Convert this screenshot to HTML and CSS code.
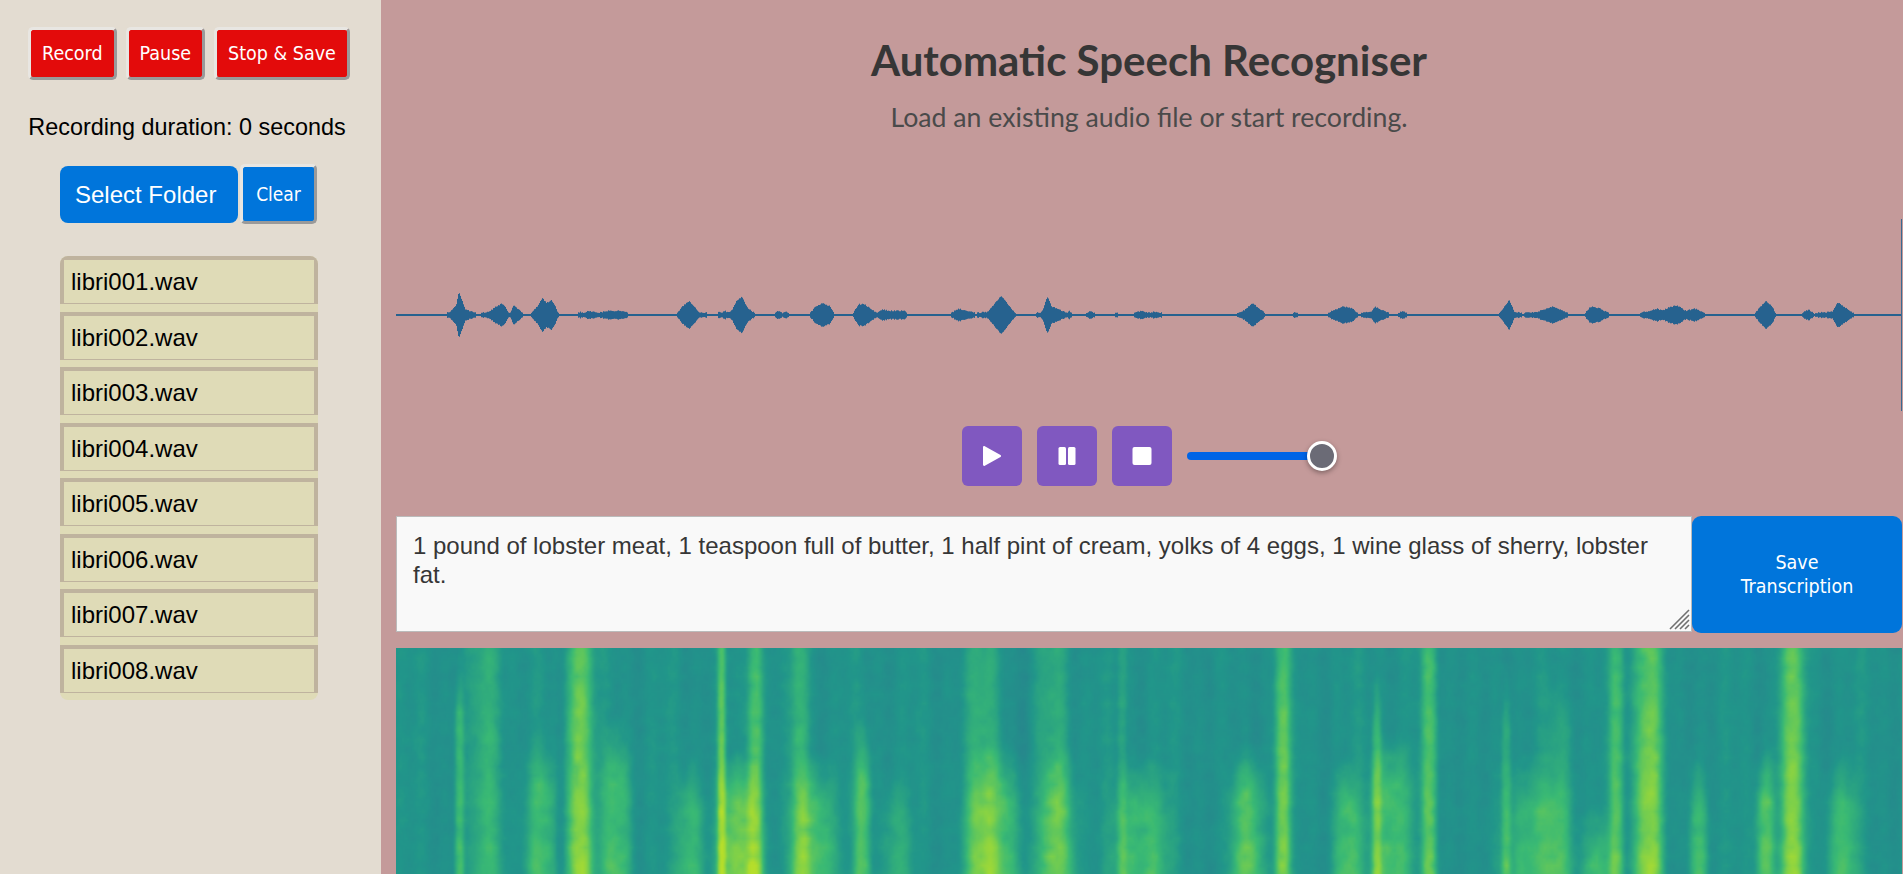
FILE: index.html
```html
<!DOCTYPE html>
<html lang="en">
<head>
    <meta charset="UTF-8">
    <meta name="viewport" content="width=device-width, initial-scale=1.0">
    <title>Automatic Speech Recogniser</title>
    <link rel="stylesheet" href="styles.css">
</head>
<body>
    <div class="sidebar">
        <div class="record-row">
            <button class="btn-red">Record</button>
            <button class="btn-red">Pause</button>
            <button class="btn-red">Stop &amp; Save</button>
        </div>
        <p class="duration">Recording duration: 0 seconds</p>
        <div class="folder-row">
            <label class="select-folder">Select Folder</label>
            <button class="btn-clear">Clear</button>
        </div>
        <ul class="file-list">
            <li>libri001.wav</li>
            <li>libri002.wav</li>
            <li>libri003.wav</li>
            <li>libri004.wav</li>
            <li>libri005.wav</li>
            <li>libri006.wav</li>
            <li>libri007.wav</li>
            <li>libri008.wav</li>
        </ul>
    </div>
    <div class="main">
        <h1 class="title">Automatic Speech Recogniser</h1>
        <p class="subtitle">Load an existing audio file or start recording.</p>
        <canvas id="waveform" class="waveform" width="1506" height="192"></canvas>
        <div class="player">
            <button class="btn-player" aria-label="Play">
                <svg width="24" height="24" viewBox="0 0 24 24"><path d="M3 3.200c0-.9 1-1.500 1.800-1L20.500 11c.8.500.8 1.600 0 2L4.800 21.800c-.8.500-1.800-.1-1.800-1z" fill="#fff"/></svg>
            </button>
            <button class="btn-player" aria-label="Pause">
                <svg width="24" height="24" viewBox="0 0 24 24"><rect x="3.500" y="3" width="7.500" height="18" rx="1.500" fill="#fff"/><rect x="13" y="3" width="7.500" height="18" rx="1.500" fill="#fff"/></svg>
            </button>
            <button class="btn-player" aria-label="Stop">
                <svg width="24" height="24" viewBox="0 0 24 24"><rect x="2.500" y="3" width="19" height="18" rx="2" fill="#fff"/></svg>
            </button>
            <input class="volume" type="range" min="0" max="100" value="100" aria-label="Volume">
        </div>
        <div class="transcript-row">
            <div class="transcript-box">
                <textarea class="transcript" aria-label="Transcription">1 pound of lobster meat, 1 teaspoon full of butter, 1 half pint of cream, yolks of 4 eggs, 1 wine glass of sherry, lobster fat.</textarea>
                <svg class="resize-grip" width="21" height="21" viewBox="0 0 21 21">
                    <path d="M1 20 20 1M6 20 20 6M11 20l9-9M16 20l4-4" stroke="#707070" stroke-width="1.600" fill="none"/>
                </svg>
            </div>
            <button class="btn-save">Save Transcription</button>
        </div>
        <canvas id="spectrogram" class="spectrogram" width="753" height="80"></canvas>
    </div>
    <script src="script.js"></script>
</body>
</html>
```

FILE: styles.css
```css
* {
    box-sizing: border-box;
}
html, body {
    height: 100%;
    margin: 0;
    overflow: hidden;
}
body {
    display: flex;
    font-family: "Liberation Sans", Arial, sans-serif;
    background-color: #c49a9a;
}
button {
    font-family: "DejaVu Sans Condensed", "DejaVu Sans", sans-serif;
    color: white;
    cursor: pointer;
}
.sidebar {
    width: 381px;
    flex: none;
    background: #e3dcd1;
    display: flex;
    flex-direction: column;
    align-items: center;
    padding-top: 27px;
}
.record-row {
    display: flex;
    gap: 9px;
    margin-left: -3px;
}
.btn-red {
    height: 53px;
    padding: 0 11px;
    font-size: 19.500px;
    background: #e30b0b;
    border-radius: 5px;
    border-width: 3px;
    border-style: solid;
    border-color: #e8e6e2 #9a9a9a #9a9a9a #e8e6e2;
}
.duration {
    margin: 34px 0 0 -7px;
    font-size: 23.400px;
    line-height: 26px;
    color: black;
}
.folder-row {
    display: flex;
    align-items: center;
    gap: 2px;
    margin: 24px 0 0 -4px;
}
.select-folder {
    width: 178px;
    height: 57px;
    padding-left: 15px;
    line-height: 57px;
    font-size: 24px;
    color: white;
    background: #0075db;
    border-radius: 8px;
}
.btn-clear {
    width: 77px;
    height: 60px;
    padding: 0;
    font-size: 19px;
    background: #0075db;
    border-radius: 5px;
    border-width: 3px;
    border-style: solid;
    border-color: #e8e6e2 #9a9a9a #9a9a9a #e8e6e2;
}
.file-list {
    list-style: none;
    width: 258px;
    margin: 32px 0 0 -3px;
    padding: 0;
    background: #dfdbb7;
    border-radius: 8px;
    overflow: hidden;
}
.file-list li {
    height: 48px;
    margin-bottom: 7.500px;
    padding: 0 7px;
    line-height: 43px;
    font-size: 24px;
    color: black;
    border-style: solid;
    border-width: 4px 4px 1px;
    border-color: #bfb39e;
}
.main {
    flex: 1;
    min-width: 0;
    height: 100%;
    overflow: hidden;
    padding: 0 1px 0 15px;
}
.title {
    margin: 34px 0 0;
    font-family: Lato, sans-serif;
    font-weight: 700;
    font-size: 42px;
    line-height: 52px;
    text-align: center;
    color: #363636;
}
.subtitle {
    margin: 16px 0 0;
    font-family: Lato, sans-serif;
    font-size: 26.700px;
    line-height: 30px;
    text-align: center;
    color: #4a4a4a;
}
.waveform {
    display: block;
    width: 1506px;
    height: 192px;
    margin-top: 87px;
}
.player {
    display: flex;
    justify-content: center;
    align-items: center;
    gap: 15px;
    margin-top: 15px;
}
.btn-player {
    width: 60px;
    height: 60px;
    padding: 0;
    border: none;
    border-radius: 6px;
    background: #8058c0;
    display: flex;
    align-items: center;
    justify-content: center;
}
.volume {
    -webkit-appearance: none;
    appearance: none;
    width: 150px;
    height: 30px;
    margin: 0;
    background: transparent;
}
.volume::-webkit-slider-runnable-track {
    height: 8px;
    border-radius: 4px;
    background: linear-gradient(to right, #0064e6 calc(100% - 15px), transparent calc(100% - 15px));
}
.volume::-webkit-slider-thumb {
    -webkit-appearance: none;
    width: 30px;
    height: 30px;
    margin-top: -11px;
    border-radius: 50%;
    border: 3.500px solid white;
    background: #6b6b76;
    box-shadow: 0 2px 5px rgba(0, 0, 0, 0.35);
}
.transcript-row {
    display: flex;
    margin-top: 30px;
    height: 117px;
}
.transcript-box {
    position: relative;
    flex: 1;
    min-width: 0;
}
.transcript {
    display: block;
    width: 100%;
    height: 116px;
    padding: 14px 16px;
    resize: none;
    border: 1px solid #bbb;
    border-radius: 0;
    background: #f9f9f9;
    font-family: "Liberation Sans", Arial, sans-serif;
    font-size: 24px;
    line-height: 29px;
    color: #363636;
    outline: none;
}
.resize-grip {
    position: absolute;
    right: 2px;
    bottom: 3px;
}
.btn-save {
    width: 210px;
    flex: none;
    padding: 0 30px;
    border: none;
    border-radius: 9px;
    background: #0075db;
    font-size: 19.500px;
    line-height: 24px;
}
.spectrogram {
    display: block;
    width: 1506px;
    height: 240px;
    margin-top: 15px;
}
```

FILE: script.js
```js
// waveform envelope, pairs of [x, half height] in px
var envelope = [
    [446, 1], [451, 3], [455, 7], [457, 12], [458, 22], [463, 9], [465, 4], [476, 1], [480, 1], [489, 2], [494, 6], [497, 7], [501, 10], [505, 7], [507, 2],
    [510, 1], [513, 9], [517, 5], [522, 1], [531, 1], [537, 7], [542, 15], [546, 10], [551, 13], [555, 7], [557, 2], [558, 1],
    [577, 1], [580, 2], [583, 1], [588, 3], [593, 2], [597, 1], [608, 3], [623, 3], [627, 1],
    [677, 1], [683, 8], [689, 12], [694, 7], [698, 2], [708, 1], [709, 1], [718, 1], [719, 3], [721, 1], [724, 3], [729, 1], [732, 4], [736, 12], [742, 16], [746, 7], [752, 2], [755, 1], [763, 1], [767, 1],
    [775, 1], [778, 3], [782, 1], [786, 2], [788, 1], [792, 1], [796, 1],
    [810, 1], [815, 7], [822, 10], [830, 7], [833, 1], [853, 1], [858, 9], [864, 9], [873, 3], [876, 1], [882, 4], [889, 3], [904, 3], [906, 1],
    [951, 1], [958, 5], [966, 3], [975, 1], [987, 2], [990, 5], [1001, 17], [1009, 7], [1015, 1],
    [1036, 1], [1037, 2], [1039, 1], [1042, 3], [1047, 17], [1051, 7], [1059, 4], [1067, 1], [1069, 3], [1071, 1],
    [1086, 1], [1090, 3], [1094, 1], [1115, 1], [1116, 2], [1117, 1], [1133, 1], [1141, 3], [1147, 1], [1154, 2], [1162, 1],
    [1236, 1], [1243, 3], [1252, 10], [1262, 3], [1264, 1], [1292, 1], [1295, 2], [1298, 1], [1327, 1], [1343, 7], [1352, 5], [1357, 1], [1359, 1],
    [1371, 2], [1374, 7], [1381, 4], [1389, 1], [1398, 1], [1402, 3], [1407, 1],
    [1499, 1], [1509, 13], [1514, 2], [1522, 1], [1537, 2], [1552, 7], [1560, 4], [1568, 1], [1585, 1],
    [1590, 7], [1600, 5], [1608, 1], [1639, 1], [1642, 2], [1647, 2], [1650, 3], [1657, 5], [1662, 3], [1668, 6], [1677, 8], [1685, 3], [1695, 5], [1705, 1],
    [1755, 1], [1760, 7], [1766, 12], [1772, 7], [1775, 1], [1802, 1], [1808, 4], [1813, 1], [1832, 2], [1837, 11], [1843, 7], [1853, 1], [1855, 1]
];

// spectrogram bands: [centre, width, strength, height they start at (0 top, 1 bottom)]
// centre and width are on a 0-1568 scale across the canvas
var bands = [
    [65, 8, 0.3, 0.15], [95, 26, 0.24, 0], [150, 26, 0.26, 0.45], [190, 22, 0.56, 0], [228, 26, 0.3, 0.4],
    [305, 24, 0.26, 0.55], [338, 7, 0.46, 0], [355, 34, 0.44, 0.55], [373, 13, 0.46, 0], [420, 14, 0.3, 0],
    [435, 36, 0.34, 0.55], [485, 14, 0.34, 0.4], [520, 24, 0.18, 0.6], [610, 30, 0.24, 0], [625, 46, 0.34, 0.5],
    [685, 25, 0.22, 0], [690, 30, 0.24, 0.5], [755, 8, 0.18, 0], [775, 46, 0.3, 0.55], [885, 28, 0.4, 0.5],
    [922, 13, 0.48, 0], [990, 24, 0.3, 0.55], [1020, 8, 0.3, 0.2], [1035, 34, 0.34, 0.45], [1075, 13, 0.38, 0],
    [1155, 8, 0.26, 0.2], [1185, 56, 0.26, 0.55], [1210, 24, 0.16, 0.2], [1250, 24, 0.26, 0.75], [1270, 12, 0.36, 0],
    [1303, 24, 0.56, 0], [1355, 16, 0.3, 0.55], [1425, 16, 0.38, 0.5], [1453, 21, 0.52, 0], [1505, 26, 0.28, 0.55],
    // quiet gaps between words
    [170, 8, -0.08, 0], [650, 12, -0.1, 0], [870, 30, -0.05, 0], [1130, 25, -0.05, 0], [1330, 20, -0.06, 0]
];

var colorStops = [
    [0, 42, 125, 142], [0.25, 33, 150, 138], [0.5, 58, 186, 116], [0.75, 125, 208, 74], [1, 181, 222, 43]
];

var seed = 7;
function rand() {
    seed = (seed * 16807) % 2147483647;
    return seed / 2147483647;
}

function envelopeAt(x) {
    for (var i = 1; i < envelope.length; i++) {
        if (x <= envelope[i][0]) {
            var a = envelope[i - 1], b = envelope[i];
            return a[1] + (b[1] - a[1]) * (x - a[0]) / (b[0] - a[0]);
        }
    }
    return 1;
}

function drawWaveform() {
    var ctx = document.querySelector('#waveform').getContext('2d');
    var mid = 96;
    ctx.fillStyle = '#26628f';
    ctx.fillRect(0, mid - 1, 1505, 2);
    for (var x = 50; x < 1460; x++) {
        var px = x + 396;
        var e = (envelopeAt(px - 1) + envelopeAt(px) * 2 + envelopeAt(px + 1)) / 4;
        if (e > 1.1) {
            var h = e * 1.08 + 1 + (rand() - 0.5) * 1.2;
            ctx.fillRect(x, mid - h, 1, h * 2);
        }
    }
    // cursor at the end of the clip
    ctx.fillStyle = '#3a6a91';
    ctx.fillRect(1505, 0, 1, 192);
}

function colorFor(v) {
    v = Math.max(0, Math.min(1, v));
    for (var i = 1; i < colorStops.length; i++) {
        if (v <= colorStops[i][0]) {
            var a = colorStops[i - 1], b = colorStops[i];
            var t = (v - a[0]) / (b[0] - a[0]);
            return [a[1] + (b[1] - a[1]) * t, a[2] + (b[2] - a[2]) * t, a[3] + (b[3] - a[3]) * t];
        }
    }
    return colorStops[4].slice(1);
}

// smooth blotches, bilinear over a coarse random grid
var grid = [];
for (var g = 0; g < 260 * 40; g++) grid[g] = rand();
function blotch(x, y) {
    var gx = x / 3.75, gy = y / 3;
    var ix = Math.floor(gx), iy = Math.floor(gy);
    var tx = gx - ix, ty = gy - iy;
    var a = grid[iy * 260 + ix], b = grid[iy * 260 + ix + 1];
    var c = grid[(iy + 1) * 260 + ix], d = grid[(iy + 1) * 260 + ix + 1];
    return (a * (1 - tx) + b * tx) * (1 - ty) + (c * (1 - tx) + d * tx) * ty;
}

function drawSpectrogram() {
    var canvas = document.querySelector('#spectrogram');
    var ctx = canvas.getContext('2d');
    var w = canvas.width, h = canvas.height;
    var img = ctx.createImageData(w, h);
    var streak = [];
    for (var c = 0; c < w; c++) streak[c] = 0.03 * Math.sin(c * 0.2) + 0.025 * Math.sin(c * 0.55 + 1) - 0.01;

    for (var y = 0; y < h; y++) {
        var fy = y / h;
        // brighter bands low down, small dips at the formant gaps
        var row = 0.68 + fy * 0.5
            - 0.16 * Math.exp(-Math.pow((fy - 0.76) / 0.04, 2))
            - 0.08 * Math.exp(-Math.pow((fy - 0.4) / 0.02, 2));
        for (var x = 0; x < w; x++) {
            var sx = x * 1568 / w;
            var v = 0.23 + streak[x];
            for (var i = 0; i < bands.length; i++) {
                var b = bands[i];
                var d = (sx - b[0]) / (b[1] * 0.62);
                if (Math.abs(d) > 3) continue;
                var gain = b[3]
                    ? Math.max(0, Math.min(1, (fy - b[3] + 0.14 - Math.abs(d) * 0.05) / 0.25)) * row
                    : row;
                v += b[2] * Math.exp(-Math.pow(Math.abs(d), 2.6)) * gain * (0.85 + 0.3 * blotch(x, y));
            }
            v += (blotch(x + 40, y) - 0.5) * 0.06 + (rand() - 0.5) * 0.02;
            var rgb = colorFor(v);
            var o = (y * w + x) * 4;
            img.data[o] = rgb[0];
            img.data[o + 1] = rgb[1];
            img.data[o + 2] = rgb[2];
            img.data[o + 3] = 255;
        }
    }
    ctx.putImageData(img, 0, 0);
}

drawWaveform();
drawSpectrogram();
```
